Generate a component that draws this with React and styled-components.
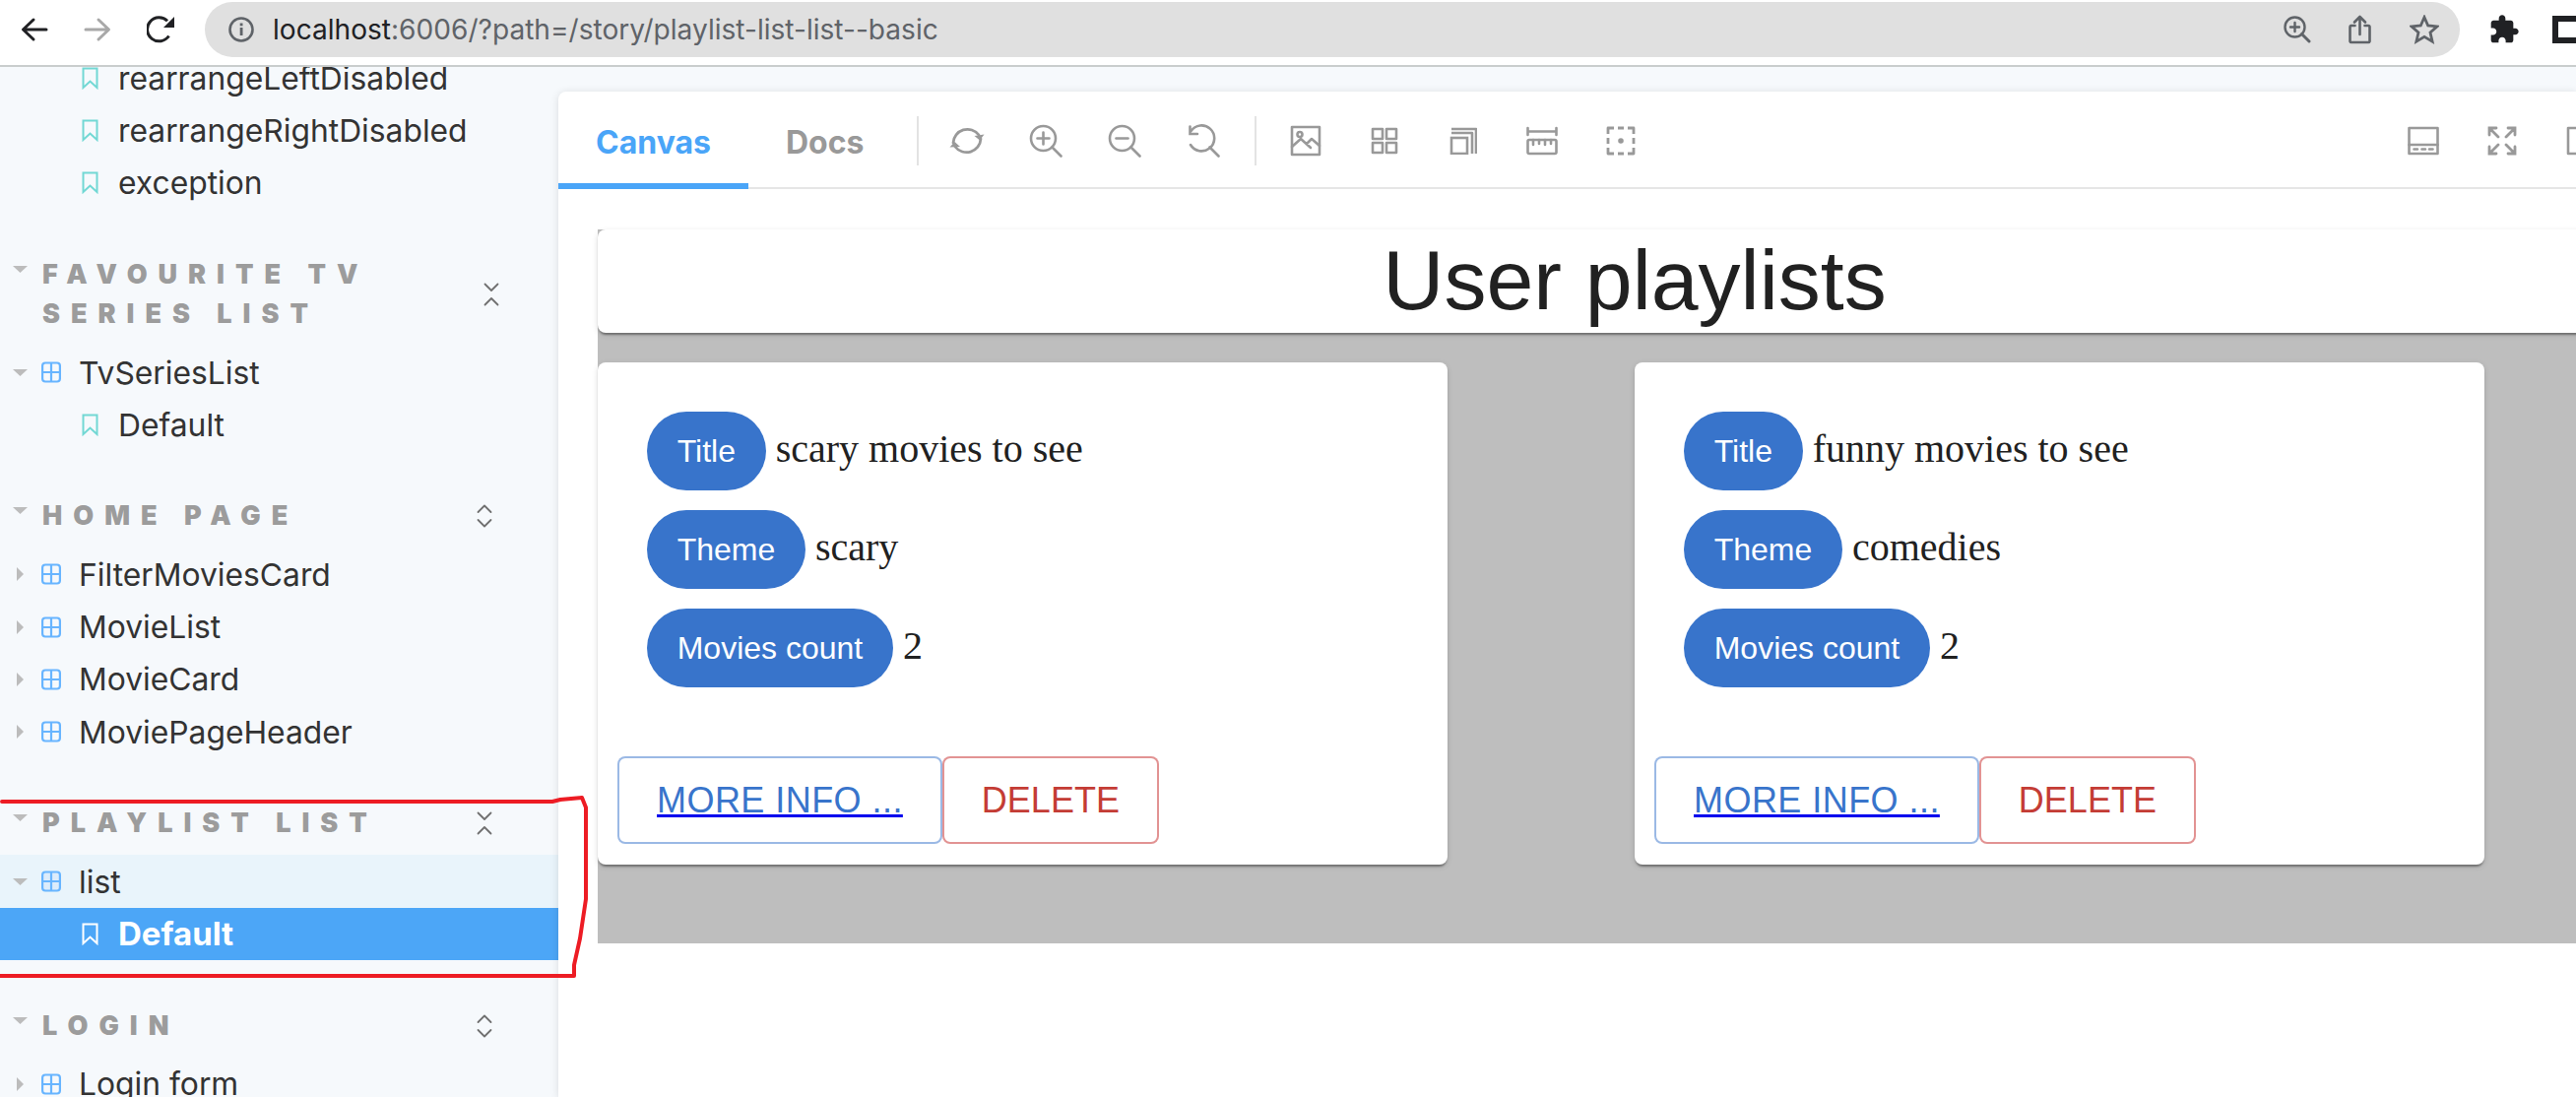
import React from "react";
import styled, { createGlobalStyle } from "styled-components";

const Global = createGlobalStyle`
  html, body { margin: 0; padding: 0; background: #fff; overflow: hidden; }
  * { box-sizing: border-box; }
`;

const Page = styled.div`
  position: relative;
  width: 2616px;
  height: 1114px;
  display: flex;
  flex-direction: column;
  overflow: hidden;
  font-family: Inter, "Liberation Sans", sans-serif;
`;

/* ---------- browser chrome ---------- */
const Chrome = styled.header`
  flex: 0 0 68px;
  display: flex;
  align-items: flex-start;
  padding: 2px 0 0 3px;
  background: #fff;
  border-bottom: 2px solid #c9cdcd;
  overflow: hidden;
`;
const NavSlot = styled.span`
  flex: 0 0 64px;
  height: 56px;
  display: flex;
  align-items: center;
  justify-content: center;
`;
const Omnibox = styled.div`
  flex: 0 0 2290px;
  height: 56px;
  margin-left: 13px;
  display: flex;
  align-items: center;
  padding: 0 0 0 23px;
  background: #e0e0e0;
  border-radius: 28px;
`;
const Url = styled.div`
  margin-left: 18px;
  font-size: 28.1px;
  color: #5f6368;
  white-space: nowrap;
`;
const Host = styled.span`
  color: #202124;
`;
const OmniActions = styled.div`
  margin-left: auto;
  display: flex;
  align-items: center;
  padding-right: 4px;
`;
const OmniSlot = styled.span`
  flex: 0 0 64.5px;
  display: flex;
  justify-content: center;
`;
const ExtSlot = styled.span`
  flex: 0 0 64px;
  height: 56px;
  margin-left: 13px;
  display: flex;
  align-items: center;
  justify-content: center;
`;
const PanelGlyph = styled.span`
  flex: 0 0 40px;
  height: 28px;
  margin: 14px 0 0 17px;
  border: 6px solid #202124;
  background: #fff;
`;

/* ---------- body ---------- */
const Body = styled.div`
  flex: 1;
  min-height: 0;
  display: flex;
`;
const Sidebar = styled.aside`
  flex: 0 0 567px;
  background: #f6f9fc;
  overflow: hidden;
`;
const SidebarInner = styled.div`
  margin-top: -15.5px;
`;
const Section = styled.section`
  margin-top: ${(p) => p.$gap ?? 46}px;
`;
const SectionHeader = styled.div`
  display: flex;
  align-items: center;
  padding: 0 67px 0 13px;
  margin-bottom: 12.5px;
`;
const HeaderArrow = styled.span`
  flex: 0 0 15px;
  align-self: flex-start;
  display: flex;
  margin-top: 11px;
`;
const SectionTitle = styled.h3`
  flex: 1;
  margin: 0 0 0 15px;
  font-size: 27px;
  line-height: 40px;
  font-weight: 900;
  letter-spacing: 11px;
  color: #9c9c9c;
  text-transform: uppercase;
`;
const CollapseSlot = styled.span`
  display: flex;
  margin-right: ${(p) => p.$shift || 0}px;
`;
const Row = styled.div`
  height: 53.33px;
  display: flex;
  align-items: center;
  font-size: ${(p) => (p.$selected ? 33 : 31.8)}px;
  color: ${(p) => (p.$selected ? "#fff" : "#333")};
  font-weight: ${(p) => (p.$selected ? 700 : 400)};
  background: ${(p) => (p.$selected ? "#4ca6f7" : p.$open ? "#e9f4fb" : "transparent")};
  padding-left: ${(p) => (p.$story ? 83 : 13)}px;
  white-space: nowrap;
`;
const ArrowSlot = styled.span`
  flex: 0 0 15px;
  display: flex;
  justify-content: center;
`;
const RowLabel = styled.span`
  margin-left: ${(p) => (p.$story ? 20 : 18)}px;
`;
const ComponentIconSlot = styled.span`
  display: flex;
  margin-left: 14px;
`;

const Main = styled.main`
  flex: 1;
  min-width: 0;
  padding-top: 25px;
  background: #f6f9fc;
  display: flex;
`;
const Panel = styled.div`
  flex: 1;
  min-width: 0;
  background: #fff;
  border-top-left-radius: 8px;
  box-shadow: 0 1px 8px rgba(0, 0, 0, 0.12);
  overflow: hidden;
`;
const Toolbar = styled.div`
  height: 99px;
  padding-top: 3px;
  display: flex;
  align-items: center;
  border-bottom: 2px solid #e6e6e6;
`;
const Tab = styled.div`
  align-self: stretch;
  display: flex;
  align-items: center;
  padding: 0 38px;
  font-size: 32px;
  font-weight: 700;
  color: ${(p) => (p.$active ? "#4aa5f8" : "#999")};
  box-shadow: ${(p) => (p.$active ? "inset 0 -6px 0 #4aa5f8" : "none")};
  margin-bottom: -2px;
`;
const Divider = styled.span`
  flex: 0 0 2px;
  height: 50px;
  background: #e3e3e3;
  margin: 0 ${(p) => p.$right ?? 10}px 0 ${(p) => p.$left ?? 10}px;
`;
const ToolButton = styled.span`
  flex: 0 0 80px;
  display: flex;
  justify-content: center;
  align-items: center;
`;
const ToolbarEnd = styled.div`
  margin-left: auto;
  margin-right: -45px;
  display: flex;
`;
const Preview = styled.div`
  width: 2106px;
  margin: 41px 0 0 40px;
  padding-bottom: 80px;
  background: #bebebe;
`;
const HeadingCard = styled.div`
  height: 105px;
  background: #fff;
  border-radius: 8px;
  margin-bottom: 30px;
  text-align: center;
  font-family: "Liberation Sans", Arial, sans-serif;
  font-size: 86px;
  line-height: 103px;
  color: #212121;
  box-shadow: 0 4px 2px -2px rgba(0, 0, 0, 0.25), 0 2px 2px rgba(0, 0, 0, 0.14), 0 2px 6px rgba(0, 0, 0, 0.12);
`;
const CardGrid = styled.div`
  display: grid;
  grid-template-columns: 1053px 1053px;
`;
const PlaylistCard = styled.article`
  width: 863px;
  height: 510px;
  background: #fff;
  border-radius: 8px;
  padding: 50px 20px 21px;
  display: flex;
  flex-direction: column;
  justify-content: space-between;
  box-shadow: 0 4px 2px -2px rgba(0, 0, 0, 0.25), 0 2px 2px rgba(0, 0, 0, 0.14), 0 2px 6px rgba(0, 0, 0, 0.12);
`;
const Fields = styled.div`
  padding-left: 30px;
  display: flex;
  flex-direction: column;
  gap: 20px;
`;
const Field = styled.div`
  display: flex;
  align-items: baseline;
  gap: 10px;
  font-family: "Liberation Serif", "Times New Roman", serif;
  font-size: 40px;
  color: #212121;
`;
const Chip = styled.span`
  height: 80px;
  display: inline-flex;
  align-items: center;
  padding: 0 30.7px;
  border-radius: 40px;
  background: #3874cb;
  color: #fff;
  font-family: "Liberation Sans", Arial, sans-serif;
  font-size: 32px;
`;
const Actions = styled.div`
  display: flex;
`;
const ActionButton = styled.a`
  height: 89px;
  display: inline-flex;
  align-items: center;
  padding: 0 38px;
  border: 2px solid ${(p) => (p.$danger ? "rgba(198,40,40,.5)" : "rgba(56,116,203,.5)")};
  border-radius: 8px;
  background: #fff;
  color: ${(p) => (p.$danger ? "#c43c35" : "#3874cb")};
  font-family: "Liberation Sans", Arial, sans-serif;
  font-size: 36px;
  text-decoration: ${(p) => (p.$danger ? "none" : "underline")};
  text-decoration-color: #0000ee;
  letter-spacing: ${(p) => (p.$danger ? 0 : 0.45)}px;
`;
const Annotation = styled.svg`
  position: absolute;
  left: 0;
  top: 0;
  pointer-events: none;
`;

/* ---------- icons ---------- */
const Svg = ({ size = 32, w, h, children, stroke = "#999", sw = 2.6, fill = "none" }) => (
  <svg width={w || size} height={h || size} viewBox={`0 0 ${w || size} ${h || size}`} fill={fill} stroke={stroke} strokeWidth={sw} strokeLinecap="round" strokeLinejoin="round">
    {children}
  </svg>
);

const BackIcon = ({ color }) => (
  <Svg size={28} stroke={color} sw={3}>
    <path d="M26 14H3M13 4 2.500 14 13 24" />
  </Svg>
);
const ForwardIcon = () => (
  <Svg size={28} stroke="#a8a8a8" sw={3}>
    <path d="M2 14h23M15 4l10.500 10L15 24" />
  </Svg>
);
const ReloadIcon = () => (
  <svg width="28" height="28" viewBox="0 0 28 28">
    <path d="M22.500 20.500A12 12 0 1 1 21 5.300" fill="none" stroke="#202124" strokeWidth="3" />
    <path d="M28 1v11H17z" fill="#202124" />
  </svg>
);
const InfoIcon = () => (
  <svg width="28" height="28" viewBox="0 0 28 28">
    <circle cx="14" cy="14" r="11.500" fill="none" stroke="#5f6368" strokeWidth="2.600" />
    <rect x="12.700" y="12" width="2.800" height="8" fill="#5f6368" />
    <rect x="12.700" y="7.500" width="2.800" height="2.800" fill="#5f6368" />
  </svg>
);
const OmniZoomIcon = () => (
  <Svg size={28} stroke="#5f6368" sw={2.4}>
    <circle cx="11.500" cy="11.500" r="10" />
    <path d="M11.500 7v9M7 11.500h9" />
    <path d="M18.500 18.500 26 26" strokeWidth={3} />
  </Svg>
);
const ShareIcon = () => (
  <Svg size={30} stroke="#5f6368" sw={2.6}>
    <path d="M9.500 11H5.500A1.500 1.500 0 0 0 4.500 12.500V27a1.500 1.500 0 0 0 1.500 1h17a1.500 1.500 0 0 0 1.500-1V12.500a1.500 1.500 0 0 0-1.500-1.500h-3.500" />
    <path d="M14.500 20V2M9 7.500l5.500-5.500 5.500 5.500" />
  </Svg>
);
const StarIcon = () => (
  <Svg size={30} stroke="#5f6368" sw={2.8}>
    <path d="M15 2.500l3.700 8.500 9.300.9-7 6.100 2.100 9.100-8.100-4.800-8.100 4.800 2.100-9.100-7-6.100 9.300-.9z" strokeLinejoin="miter" />
  </Svg>
);
const PuzzleIcon = () => (
  <svg width="32" height="32" viewBox="0 0 24 24" fill="#202124">
    <path d="M20.500 11H19V7c0-1.100-.9-2-2-2h-4V3.500C13 2.120 11.880 1 10.500 1S8 2.120 8 3.500V5H4c-1.100 0-1.990.9-1.990 2v3.800H3.500c1.490 0 2.700 1.210 2.700 2.700s-1.210 2.700-2.700 2.700H2V20c0 1.100.9 2 2 2h3.800v-1.500c0-1.490 1.210-2.700 2.700-2.700 1.490 0 2.700 1.210 2.700 2.700V22H17c1.100 0 2-.9 2-2v-4h1.500c1.380 0 2.500-1.120 2.500-2.500S21.880 11 20.500 11z" />
  </svg>
);

const SyncIcon = () => (
  <Svg size={36} sw={2.8}>
    <path d="M4 20A14.500 14.500 0 0 1 30 12" />
    <path d="M32 16A14.500 14.500 0 0 1 6 24" />
    <path d="M25.500 13l5.500 4.500 4.500-6z" fill="#999" strokeWidth={0} />
    <path d="M.5 24.500l5-5.500 5.500 5z" fill="#999" strokeWidth={0} />
  </Svg>
);
const ZoomInIcon = () => (
  <Svg size={34}>
    <circle cx="14.500" cy="14.500" r="12.500" />
    <path d="M14.500 8.500v12M8.500 14.500h12" />
    <path d="M23.500 23.500l9 9" />
  </Svg>
);
const ZoomOutIcon = () => (
  <Svg size={34}>
    <circle cx="14.500" cy="14.500" r="12.500" />
    <path d="M8.500 14.500h12" />
    <path d="M23.500 23.500l9 9" />
  </Svg>
);
const ZoomResetIcon = () => (
  <Svg size={34}>
    <path d="M4.500 7A13 13 0 1 1 4 21" />
    <path d="M3.500 2.500v7.500h7.500" strokeLinejoin="miter" />
    <path d="M23.500 23.500l9 9" />
  </Svg>
);
const ImageIcon = () => (
  <Svg size={32}>
    <rect x="2" y="2" width="28" height="28" />
    <circle cx="10" cy="9.500" r="2.500" />
    <path d="M2 22l9-8 10 9M17 19l5-5 8 7" />
  </Svg>
);
const GridIcon = () => (
  <Svg size={28}>
    <rect x="2" y="2" width="10" height="10" />
    <rect x="16" y="2" width="10" height="10" />
    <rect x="2" y="16" width="10" height="10" />
    <rect x="16" y="16" width="10" height="10" />
  </Svg>
);
const OutlineIcon = () => (
  <Svg size={28}>
    <rect x="2" y="11" width="16" height="16" strokeLinejoin="miter" />
    <path d="M2 6h21v21M2 2h25v25" strokeLinecap="butt" />
  </Svg>
);
const MeasureIcon = () => (
  <Svg size={32}>
    <path d="M1.500 3v7M30.500 3v7M1.500 6.500h29" />
    <rect x="1.500" y="15" width="29" height="14" rx="1.500" />
    <path d="M7 15v5M13 15v4M19 15v5M25 15v4" />
  </Svg>
);
const DashedIcon = () => (
  <Svg size={30} sw={2.8}>
    <path d="M2 8V2h6M12 2h6M22 2h6v6M28 12v6M28 22v6h-6M18 28h-6M8 28H2v-6M2 18v-6" strokeLinecap="butt" />
    <circle cx="15" cy="15" r="1.400" fill="#999" />
  </Svg>
);
const BottomPanelIcon = () => (
  <Svg size={32}>
    <rect x="1.500" y="3" width="29" height="26" />
    <path d="M1.500 20h29" />
    <path d="M6.500 24.500h3.500M14.500 24.500h3.500M22 24.500h3.500" />
  </Svg>
);
const ExpandIcon = () => (
  <Svg size={30} sw={2.8}>
    <path d="M2 9V2h7M2 2l9 9M21 2h7v7M28 2l-9 9M2 21v7h7M2 28l9-9M28 21v7h-7M28 28l-9-9" strokeLinejoin="miter" />
  </Svg>
);
const SidePanelIcon = () => (
  <Svg size={30}>
    <rect x="2" y="2" width="26" height="26" />
    <path d="M19 2v26" />
  </Svg>
);
const Collapse = ({ open }) => (
  <Svg w={16} h={26} stroke="#707070" sw={1.8}>
    {open ? (
      <path d="M1.500 9 8 2.500 14.500 9M1.500 17 8 23.500 14.500 17" />
    ) : (
      <path d="M1.500 2.500 8 9l6.500-6.500M1.500 23.500 8 17l6.500 6.500" />
    )}
  </Svg>
);
const ArrowDown = () => (
  <svg width="15" height="7" viewBox="0 0 15 7">
    <path d="M0 0h15L7.500 7z" fill="#bcbcbc" />
  </svg>
);
const ArrowRight = () => (
  <svg width="7" height="14" viewBox="0 0 7 14">
    <path d="M0 0l7 7-7 7z" fill="#bcbcbc" />
  </svg>
);
const ComponentIcon = ({ dim }) => (
  <svg width="20" height="22" viewBox="0 0 20 22" fill="none" stroke="#68b5ff" strokeWidth="2.200">
    <rect x="1.100" y="1.500" width="17.800" height="19" rx="3" fill={dim ? "#dcecfb" : "none"} />
    <path d="M10 1.500v19M1 11h18" />
  </svg>
);
const BookmarkIcon = ({ white }) => (
  <svg width="17" height="23" viewBox="0 0 17 23" fill="none" stroke={white ? "#fff" : "#72d8d4"} strokeWidth="2">
    <path d="M1.500 1.500h14v19.500l-7-6.500-7 6.500z" />
  </svg>
);

const ComponentRow = ({ open, label, selected }) => (
  <Row $open={selected}>
    <ArrowSlot>{open ? <ArrowDown /> : <ArrowRight />}</ArrowSlot>
    <ComponentIconSlot>
      <ComponentIcon dim={selected} />
    </ComponentIconSlot>
    <RowLabel>{label}</RowLabel>
  </Row>
);
const StoryRow = ({ label, selected }) => (
  <Row $story $selected={selected}>
    <BookmarkIcon white={selected} />
    <RowLabel $story>{label}</RowLabel>
  </Row>
);
const Header = ({ title, open, shift }) => (
  <SectionHeader>
    <HeaderArrow>
      <ArrowDown />
    </HeaderArrow>
    <SectionTitle>{title}</SectionTitle>
    <CollapseSlot $shift={shift}>
      <Collapse open={open} />
    </CollapseSlot>
  </SectionHeader>
);

const Playlist = ({ title, theme, count }) => (
  <PlaylistCard>
    <Fields>
      <Field>
        <Chip>Title</Chip>
        {title}
      </Field>
      <Field>
        <Chip>Theme</Chip>
        {theme}
      </Field>
      <Field>
        <Chip>Movies count</Chip>
        {count}
      </Field>
    </Fields>
    <Actions>
      <ActionButton href="#">MORE INFO ...</ActionButton>
      <ActionButton $danger>DELETE</ActionButton>
    </Actions>
  </PlaylistCard>
);

export default function App() {
  return (
    <Page>
      <Global />
      <Chrome>
        <NavSlot><BackIcon color="#202124" /></NavSlot>
        <NavSlot><ForwardIcon /></NavSlot>
        <NavSlot><ReloadIcon /></NavSlot>
        <Omnibox>
          <InfoIcon />
          <Url>
            <Host>localhost</Host>:6006/?path=/story/playlist-list-list--basic
          </Url>
          <OmniActions>
            <OmniSlot><OmniZoomIcon /></OmniSlot>
            <OmniSlot><ShareIcon /></OmniSlot>
            <OmniSlot><StarIcon /></OmniSlot>
          </OmniActions>
        </Omnibox>
        <ExtSlot><PuzzleIcon /></ExtSlot>
        <PanelGlyph />
      </Chrome>
      <Body>
        <Sidebar>
          <SidebarInner>
            <StoryRow label="rearrangeLeftDisabled" />
            <StoryRow label="rearrangeRightDisabled" />
            <StoryRow label="exception" />
            <Section $gap={46.5}>
              <Header title="Favourite TV Series list" shift={-7} />
              <ComponentRow open label="TvSeriesList" />
              <StoryRow label="Default" />
            </Section>
            <Section>
              <Header title="Home page" open />
              <ComponentRow label="FilterMoviesCard" />
              <ComponentRow label="MovieList" />
              <ComponentRow label="MovieCard" />
              <ComponentRow label="MoviePageHeader" />
            </Section>
            <Section>
              <Header title="Playlist list" />
              <ComponentRow open selected label="list" />
              <StoryRow selected label="Default" />
            </Section>
            <Section $gap={46.5}>
              <Header title="Login" open />
              <ComponentRow label="Login form" />
            </Section>
          </SidebarInner>
        </Sidebar>
        <Main>
          <Panel>
            <Toolbar>
              <Tab $active>Canvas</Tab>
              <Tab>Docs</Tab>
              <Divider $left={16} $right={9} />
              <ToolButton><SyncIcon /></ToolButton>
              <ToolButton><ZoomInIcon /></ToolButton>
              <ToolButton><ZoomOutIcon /></ToolButton>
              <ToolButton><ZoomResetIcon /></ToolButton>
              <Divider $left={12} $right={10} />
              <ToolButton><ImageIcon /></ToolButton>
              <ToolButton><GridIcon /></ToolButton>
              <ToolButton><OutlineIcon /></ToolButton>
              <ToolButton><MeasureIcon /></ToolButton>
              <ToolButton><DashedIcon /></ToolButton>
              <ToolbarEnd>
                <ToolButton><BottomPanelIcon /></ToolButton>
                <ToolButton><ExpandIcon /></ToolButton>
                <ToolButton><SidePanelIcon /></ToolButton>
              </ToolbarEnd>
            </Toolbar>
            <Preview>
              <HeadingCard>User playlists</HeadingCard>
              <CardGrid>
                <Playlist title="scary movies to see" theme="scary" count="2" />
                <Playlist title="funny movies to see" theme="comedies" count="2" />
              </CardGrid>
            </Preview>
          </Panel>
        </Main>
      </Body>
      <Annotation width="620" height="1114" viewBox="0 0 620 1114" fill="none">
        <path d="M2 814H561L569 812 591 810 595 820V913L589 953 583 980V991H0" stroke="#ed1c24" strokeWidth="4" strokeLinejoin="round" strokeLinecap="round" />
      </Annotation>
    </Page>
  );
}
